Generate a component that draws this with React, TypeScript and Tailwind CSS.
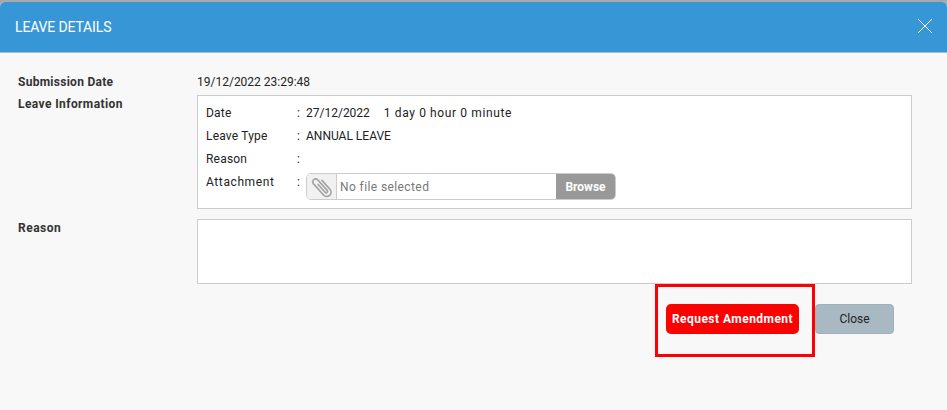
import React from "react";

const font = { label: "font-['Roboto',sans-serif]" };

const infoRows = [
  { label: "Date", value: "27/12/2022", extra: "1 day 0 hour 0 minute" },
  { label: "Leave Type", value: "ANNUAL LEAVE" },
  { label: "Reason", value: "" },
];

function PaperClip() {
  return (
    <svg width="24" height="26" viewBox="0 0 24 26" fill="none" stroke="#a2a2a2" strokeWidth="1.6" strokeLinecap="round">
      <g transform="rotate(-42 12 13)">
        <path d="M10.8 8.5 V19 a1.4 1.4 0 0 0 2.8 0 V5 a2.9 2.9 0 0 0 -5.8 0 V20 a4.3 4.3 0 0 0 8.6 0 V8" />
      </g>
    </svg>
  );
}

export default function App() {
  return (
    <div className={`h-[410px] w-[947px] overflow-hidden bg-[#a9a9a9] pt-[2px] ${font.label}`}>
      <div className="flex h-[408px] flex-col overflow-hidden rounded-t-[5px] bg-[#f8f8f8]">
        <header className="flex h-[51px] shrink-0 items-center justify-between border-b border-b-[#b5b9bc] bg-[#3797d6] pl-[15px] pr-[14px]">
          <h1 className="text-[14px] tracking-[-0.15px] text-white">LEAVE DETAILS</h1>
          <svg width="16" height="16" viewBox="0 0 16 16" stroke="white" strokeWidth="1" className="mb-[2px]">
            <path d="M1 1 L15 15 M15 1 L1 15" />
          </svg>
        </header>

        <main className="relative flex-1 pl-[18px] pr-[35px] pt-[18px] text-[12px] text-[#222]">
          <div className="flex h-[24px] items-start pt-[2px]">
            <div className="w-[179px] font-bold tracking-[0.27px] text-[#333]">Submission Date</div>
            <div>19/12/2022 23:29:48</div>
          </div>

          <div className="flex">
            <div className="w-[179px] font-bold tracking-[0.4px] text-[#333]">Leave Information</div>
            <div className="h-[114px] flex-1 border border-[#cccccc] bg-white pl-[8px] pt-[5px]">
              {infoRows.map((row) => (
                <div key={row.label} className="flex h-[23px] items-center">
                  <div className="w-[91px] tracking-[0.2px]">{row.label}</div>
                  <div className="w-[9px]">:</div>
                  <div>{row.value}</div>
                  {row.extra && <div className="ml-[14px] tracking-[0.62px]">{row.extra}</div>}
                </div>
              ))}
              <div className="mt-[3px] flex">
                <div className="w-[91px] tracking-[0.6px]">Attachment</div>
                <div className="w-[9px]">:</div>
                <div className="flex h-[27px] w-[310px] overflow-hidden rounded-[5px] border border-[#cccccc] bg-white">
                  <div className="flex w-[30px] items-center justify-center border-r border-r-[#cccccc] bg-[#f1f1f1]">
                    <PaperClip />
                  </div>
                  <div className="flex flex-1 items-center pl-[3px] tracking-[0.4px] text-[#777]">No file selected</div>
                  <div className="flex w-[59px] items-center justify-center bg-[#999999] font-bold text-white">Browse</div>
                </div>
              </div>
            </div>
          </div>

          <div className="mt-[10px] flex">
            <div className="w-[179px] font-bold tracking-[0.5px] text-[#333]">Reason</div>
            <div className="h-[65px] flex-1 border border-[#cccccc] bg-white" />
          </div>

          <div className="mt-[20px] flex justify-end pr-[18px]">
            <button className="h-[30px] w-[133px] rounded-[5px] bg-[#ff0000] text-[12px] font-bold tracking-[0.47px] text-white">
              Request Amendment
            </button>
            <button className="ml-[16px] h-[30px] w-[79px] rounded-[4px] border border-[#a0b1bb] bg-[#a9b9c3] text-[12px] text-[#222]">
              Close
            </button>
          </div>

          <div className="absolute left-[655px] top-[231px] h-[73px] w-[160px] border-[3px] border-[#ff0000]" />
        </main>
      </div>
    </div>
  );
}
